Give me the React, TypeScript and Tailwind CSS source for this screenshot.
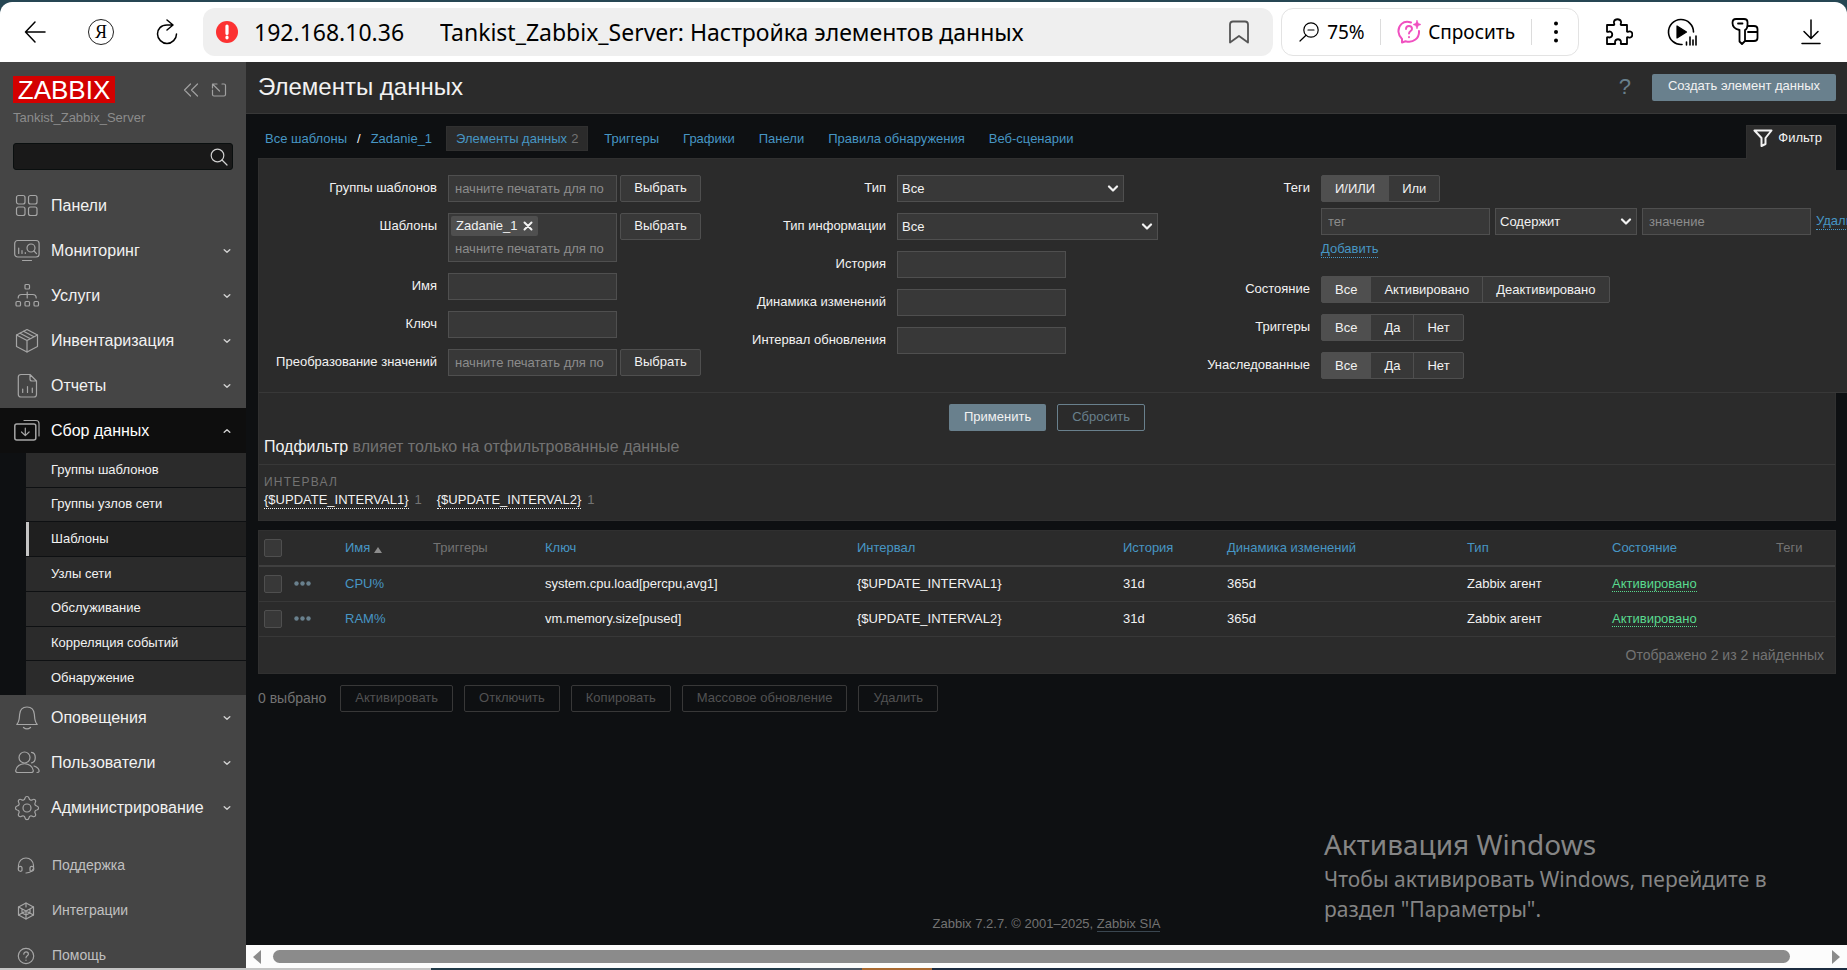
import type { ReactNode } from "react";

const sans = "font-['Liberation_Sans',Arial,sans-serif]";
const ui = "font-['Noto_Sans','Open_Sans',sans-serif]";
const field =
  "h-[27px] border border-[#4f4f4f] bg-[#383838] px-[6px] text-[13px] text-[#f2f2f2] outline-none placeholder:text-[#8c8c8c]";

function Svg({ className, box = "0 0 26 26", children }: { className?: string; box?: string; children: ReactNode }) {
  return (
    <svg aria-hidden="true" viewBox={box} fill="none" stroke="currentColor" strokeWidth="1.2" strokeLinecap="round" strokeLinejoin="round" className={className}>
      {children}
    </svg>
  );
}

const icons: Record<string, ReactNode> = {
  panels: (
    <>
      <rect x="2.5" y="2.5" width="8.5" height="8.5" rx="2" />
      <rect x="14.5" y="2.5" width="8.5" height="8.5" rx="2" />
      <rect x="2.5" y="14" width="8.5" height="8.5" rx="2" />
      <rect x="14.5" y="14" width="8.5" height="8.5" rx="2" />
    </>
  ),
  monitoring: (
    <>
      <rect x="0.7" y="2.5" width="24.4" height="16.5" rx="3" />
      <path d="M8.5 22.5h9M4.7 10v5.5M8 12.5v3M11.3 14.5v1" />
      <circle cx="17" cy="10" r="4" />
      <path d="M20 13l2.5 2.7" />
    </>
  ),
  services: (
    <>
      <rect x="11" y="1.5" width="4.5" height="4.5" rx="1" />
      <rect x="2" y="18.5" width="4.5" height="4.5" rx="1" />
      <rect x="11" y="18.5" width="4.5" height="4.5" rx="1" />
      <rect x="20" y="18.5" width="4.5" height="4.5" rx="1" />
      <path d="M13.2 9v6M4.2 15c0-2.500 1-3.500 3.500-3.500h11c2.500 0 3.500 1 3.500 3.500" />
    </>
  ),
  inventory: (
    <>
      <path d="M13 1.500l10.500 5.500v11.500L13 24 2.500 18.500V7z" />
      <path d="M2.500 7L13 12.500 23.500 7M13 12.500V24M6 5.200l10.500 5.500M9.500 3.300L20 8.800" />
    </>
  ),
  reports: (
    <>
      <path d="M7 1.500h9l6.500 6.500v13.500c0 1.500-1 2.500-2.500 2.500H7c-1.700 0-2.700-1-2.700-2.500V4c0-1.500 1-2.500 2.700-2.500zM16 1.500V6c0 1.300.7 2 2 2h4.500" />
      <path d="M8.700 16v3.500M13.500 13.500v6M18.300 15v4.500" />
    </>
  ),
  collection: (
    <>
      <rect x="0.800" y="6" width="21" height="16" rx="2" strokeWidth="1.500" />
      <path d="M10 2.500h12c2.200 0 3 .8 3 3V18M11.300 10v7.500M7.500 14l3.800 3.600 3.800-3.600" />
    </>
  ),
  alerts: (
    <>
      <path d="M2.800 19.500c2.700-3 2.500-6 2.800-10C6 4.500 9 2 13 2s7 2.500 7.400 7.500c.3 4 .1 7 2.800 10z" />
      <path d="M9.500 22.500c2 1.700 5 1.700 7 0" />
    </>
  ),
  users: (
    <>
      <circle cx="10.500" cy="7.500" r="5.500" />
      <path d="M1.700 20.500c1-9 16.500-9 17.600 0 .1 1.500-.8 2-2 2H3.700c-1.200 0-2.100-.5-2-2z" />
      <path d="M17.500 2.300c5 .5 5 10 0 10.500M20 16c3.500 1 5.500 3.500 5 5.500-.2.700-.7 1-2 1" />
    </>
  ),
  admin: (
    <>
      <circle cx="13" cy="13" r="4" />
      <path d="M11 3.200c.5-2.300 3.500-2.300 4 0 .3 1.800 2 2.500 3.500 1.500 2-1.300 4.100.8 2.800 2.800-1 1.500-.3 3.200 1.500 3.500 2.300.5 2.300 3.500 0 4-1.800.3-2.500 2-1.500 3.500 1.300 2-.8 4.100-2.800 2.800-1.500-1-3.200-.3-3.500 1.500-.5 2.300-3.500 2.300-4 0-.3-1.800-2-2.500-3.500-1.500-2 1.300-4.100-.8-2.800-2.800 1-1.500.3-3.200-1.500-3.500-2.300-.5-2.300-3.500 0-4 1.800-.3 2.500-2 1.500-3.500-1.300-2 .8-4.100 2.800-2.800 1.500 1 3.200.3 3.500-1.500z" />
    </>
  ),
  support: (
    <>
      <path d="M1.500 11V8.500C1.500 4 5 1 9 1s7.500 3 7.500 7.500V11M16 12c-.5 2.500-3 3.500-7 4" />
      <path d="M1.300 11c0-2 3.700-2.500 3.700 0v2c0 2-3.700 1.500-3.700-.5zM16.700 11c0-2-3.700-2.500-3.700 0v2c0 2 3.700 1.500 3.700-.5z" />
    </>
  ),
  integrations: (
    <>
      <path d="M9 1l7.500 4v8L9 17l-7.500-4V5z" />
      <path d="M1.500 5L9 9l7.500-4M9 9v8M9 1v4M1.500 13L9 9l7.500 4M5 7v4l4 2 4-2V7" />
    </>
  ),
  help: (
    <>
      <circle cx="9" cy="9" r="7.700" />
      <path d="M6.800 7.200c0-3 4.600-3 4.600 0 0 1.600-2.400 1.700-2.400 3.600M9 13v.3" />
    </>
  ),
};

function Chevron({ up = false }: { up?: boolean }) {
  return (
    <Svg box="0 0 8 6" className="h-[6px] w-[8px] text-[#d0d0d0]">
      <path strokeWidth="1.400" d={up ? "M1.200 4.300l2.800-2.600 2.800 2.600" : "M1.200 1.700l2.800 2.600 2.800-2.600"} />
    </Svg>
  );
}

function MenuItem({ icon, label, arrow = "down" }: { icon: string; label: string; arrow?: "down" | "up" | "none" }) {
  return (
    <a href="#" className={`flex h-[45px] shrink-0 items-center pr-[15px] pl-[14px] text-[16px] text-[#f2f2f2] ${arrow === "up" ? "bg-[#0e0e0e] text-white" : ""}`}>
      <Svg className="mr-[11px] size-[26px] text-[#a6a6a6]">{icons[icon]}</Svg>
      <span className="flex-1">{label}</span>
      {arrow !== "none" && <Chevron up={arrow === "up"} />}
    </a>
  );
}

function SmallItem({ icon, label }: { icon: string; label: string }) {
  return (
    <a href="#" className="flex h-[45px] shrink-0 items-center pl-[17px] text-[14px] text-[#c0c0c0]">
      <Svg box="0 0 18 18" className="mr-[17px] size-[18px] text-[#a6a6a6]">{icons[icon]}</Svg>
      {label}
    </a>
  );
}

const submenu = ["Группы шаблонов", "Группы узлов сети", "Шаблоны", "Узлы сети", "Обслуживание", "Корреляция событий", "Обнаружение"];

function Sidebar() {
  return (
    <aside className="flex w-[246px] shrink-0 flex-col overflow-hidden bg-[#454545]">
      <div className="flex items-center justify-between pt-[14px] pr-[19px] pl-[13px]">
        <a href="#" className="flex h-[27px] w-[102px] items-center justify-center bg-[#d40000] text-[26px] leading-none text-white">
          ZABBIX
        </a>
        <div className="flex items-center gap-[12px] text-[#a0a0a0]">
          <button type="button" aria-label="Свернуть меню">
            <Svg box="0 0 16 14" className="h-[14px] w-[16px]"><path d="M7.500 1l-6 6 6 6M14.500 1l-6 6 6 6" /></Svg>
          </button>
          <button type="button" aria-label="Скрыть меню">
            <Svg box="0 0 16 14" className="h-[14px] w-[16px]"><path d="M1.500 7v4.500c0 1 .5 1.500 1.500 1.500h10c1 0 1.500-.5 1.500-1.500V2.500c0-1-.5-1.500-1.500-1.500h-2M8.500 8L2 1.500M1.500 5V1h4.500" /></Svg>
          </button>
        </div>
      </div>
      <div className="mt-[7px] pl-[13px] text-[13px] leading-[16px] text-[#8c8c8c]">Tankist_Zabbix_Server</div>
      <form className="mx-[13px] mt-[17px] mb-[13px] flex h-[27px] shrink-0 items-center rounded-[3px] border border-[#0a0f0f] bg-[#191919] pr-[4px]">
        <input aria-label="Поиск" type="text" className="min-w-0 flex-1 bg-transparent px-[6px] text-[13px] text-white outline-none" />
        <button type="button" aria-label="Найти" className="text-[#d0d0d0]">
          <Svg box="0 0 18 18" className="size-[18px]"><circle cx="7.500" cy="7.500" r="6.300" /><path d="M12 12l5 5" /></Svg>
        </button>
      </form>
      <nav className="flex flex-col">
        <MenuItem icon="panels" label="Панели" arrow="none" />
        <MenuItem icon="monitoring" label="Мониторинг" />
        <MenuItem icon="services" label="Услуги" />
        <MenuItem icon="inventory" label="Инвентаризация" />
        <MenuItem icon="reports" label="Отчеты" />
        <MenuItem icon="collection" label="Сбор данных" arrow="up" />
        <div className="flex h-[242px] flex-col gap-px bg-[#0e1012] pl-[26px]">
          {submenu.map((s) => (
            <a key={s} href="#" className={`flex flex-1 items-center border-l-3 pb-px pl-[22px] text-[13px] text-[#f2f2f2] ${s === "Шаблоны" ? "border-[#c4c4c4] bg-[#1f1f1f]" : "border-[#2b2b2b] bg-[#2b2b2b]"}`}>
              {s}
            </a>
          ))}
        </div>
        <MenuItem icon="alerts" label="Оповещения" />
        <MenuItem icon="users" label="Пользователи" />
        <MenuItem icon="admin" label="Администрирование" />
      </nav>
      <nav className="mt-[13px] flex flex-col">
        <SmallItem icon="support" label="Поддержка" />
        <SmallItem icon="integrations" label="Интеграции" />
        <SmallItem icon="help" label="Помощь" />
      </nav>
    </aside>
  );
}

function BrowserBar() {
  return (
    <header className={`flex h-[60px] shrink-0 items-center rounded-t-[12px] bg-white pr-[26px] pl-[24px] text-black ${ui}`}>
      <button type="button" aria-label="Назад" className="mr-[42px]">
        <Svg box="0 0 22 24" className="h-[24px] w-[22px]"><path strokeWidth="1.500" d="M21 12H1.500M11 2L1.500 12 11 22" /></Svg>
      </button>
      <button type="button" aria-label="Яндекс" className="mr-[42px]">
        <span className="flex size-[26px] items-center justify-center rounded-full border border-[#222] font-['Liberation_Serif',serif] text-[18px] leading-none">Я</span>
      </button>
      <button type="button" aria-label="Обновить" className="mr-[25px]">
        <Svg box="0 0 22 26" className="h-[26px] w-[22px]"><path strokeWidth="1.500" d="M11 1l6 5-6 5M17 6h-6C5 6 1.500 10 1.500 15S6 24.500 11 24.500s9.500-4.500 9.500-9.500" /></Svg>
      </button>
      <div className="flex h-[48px] min-w-0 flex-1 items-center rounded-[12px] bg-[#efefef] pr-[24px] pl-[13px] text-[23px]">
        <svg aria-hidden="true" viewBox="0 0 22 22" className="mr-[16px] size-[22px] shrink-0">
          <circle cx="11" cy="11" r="11" fill="#fc3131" />
          <path d="M11 5v7.500M11 16.200v.6" stroke="#fff" strokeWidth="3.200" strokeLinecap="round" />
        </svg>
        <span className="mr-[36px]">192.168.10.36</span>
        <span className="flex-1 truncate">Tankist_Zabbix_Server: Настройка элементов данных</span>
        <button type="button" aria-label="В закладки" className="text-[#555]">
          <Svg box="0 0 20 24" className="h-[24px] w-[20px]"><path strokeWidth="1.800" d="M4 1.500h12c2 0 3 1 3 3v18L10 16l-9 6.500v-18c0-2 1-3 3-3z" /></Svg>
        </button>
      </div>
      <div className="ml-[8px] flex h-[48px] shrink-0 items-center rounded-[12px] border border-[#e3e3e3] pr-[20px] pl-[17px]">
        <Svg box="0 0 20 20" className="mr-[8px] size-[20px]"><circle cx="12" cy="8" r="7.200" /><path d="M7 13.200L1 19M9 8h6" /></Svg>
        <span className="w-[53px] text-[19px]">75%</span>
        <span className="h-[26px] border-l border-[#dcdcdc]" />
        <Svg box="0 0 24 24" className="mr-[7px] ml-[16px] size-[24px] text-[#f050c0]">
          <path strokeWidth="2" d="M14 2.500C6-.5 1 6 1.500 12c.2 3 1.500 5 3.500 7v3.500l3.500-1.300c8 2.300 14-3.200 13.500-10.200" />
          <path strokeWidth="1.900" d="M9 9c0-4 6-4 6 0 0 2-3 2-3 4.500M12 17v.2" />
          <path d="M20 0l1.200 3.300L24 4.500l-2.800 1.200L20 9l-1.200-3.300L16 4.500l2.800-1.200z" fill="currentColor" strokeWidth="0.500" />
        </Svg>
        <button type="button" className="mr-[16px] text-[19px]">Спросить</button>
        <span className="h-[26px] border-l border-[#dcdcdc]" />
        <button type="button" aria-label="Меню" className="ml-[22px]">
          <svg aria-hidden="true" viewBox="0 0 4 22" className="h-[22px] w-[4px]"><circle cx="2" cy="2.500" r="2" /><circle cx="2" cy="11" r="2" /><circle cx="2" cy="19.500" r="2" /></svg>
        </button>
      </div>
      <div className="ml-[26px] flex shrink-0 items-center gap-[34px]">
        <button type="button" aria-label="Расширения">
          <Svg box="0 0 28 28" className="size-[28px]"><path strokeWidth="1.800" d="M2 7h7c1-.5-.5-2 0-3.500C10 .5 15 .5 16 3.500c.5 1.500-1 3 0 3.500h6v6.500c.5 1 2-.5 3.500 0 2.500 1 2.500 5 0 6-1.500.5-3-1-3.500 0V26h-6c-.7-.5.3-1.500 0-2.500-.8-3-5.200-3-6 0-.3 1 .7 2 0 2.500H2v-6.500c.5-1 2 0 3 0 3-1 3-5 0-6-1 0-2.500 1-3 0z" /></Svg>
        </button>
        <button type="button" aria-label="Плеер">
          <Svg box="0 0 30 28" className="h-[28px] w-[30px]"><path strokeWidth="1.600" d="M15 26.500A12.500 12.500 0 1 1 26.500 14" /><path d="M10 8v12l9.500-6z" fill="currentColor" /><path strokeWidth="1.600" d="M19.500 24v3M23 19v8M26 22v5M29 18v9" /></Svg>
        </button>
        <button type="button" aria-label="Пароли">
          <Svg box="0 0 28 28" className="size-[28px]"><path strokeWidth="1.800" d="M5 1h8c2.500 0 3.500 1 3.500 3v3c0 2.500-.5 4-2.500 5v11l-3 3-2.500-2.500V12C4 11 1.500 9 1.500 5c0-3 1-4 3.500-4zM7 5.500h4.500M17 8h6c2.500 0 3.500 1 3.500 3v9c0 2-1 3-3.500 3h-9M17 14h9.500" /></Svg>
        </button>
        <button type="button" aria-label="Загрузки" className="ml-[8px]">
          <Svg box="0 0 20 26" className="h-[26px] w-[20px]"><path strokeWidth="1.500" d="M10 1v18M3 12.500l7 7 7-7M1 24.500h18" /></Svg>
        </button>
      </div>
    </header>
  );
}

function Label({ id, children }: { id?: string; children: ReactNode }) {
  return <label htmlFor={id} className="self-start text-right leading-[26px]">{children}</label>;
}

function PickButton() {
  return <button type="button" className="h-[27px] w-[81px] rounded-[2px] border border-[#4f4f4f] bg-[#383838] pb-px">Выбрать</button>;
}

function Select({ id, width, value, label }: { id: string; width: string; value: string; label?: string }) {
  return (
    <div className={`grid items-center ${width}`}>
      <select id={id} aria-label={label} className="col-start-1 row-start-1 h-[27px] w-full appearance-none border border-[#4f4f4f] bg-[#383838] px-[4px] text-[13px] text-[#f2f2f2]">
        <option>{value}</option>
      </select>
      <Svg box="0 0 12 8" className="pointer-events-none col-start-1 row-start-1 mr-[5px] h-[8px] w-[12px] justify-self-end text-[#f2f2f2]">
        <path strokeWidth="2.200" d="M2 1.500l4 4 4-4" />
      </Svg>
    </div>
  );
}

function Segmented({ name, options }: { name: string; options: string[] }) {
  return (
    <div role="radiogroup" aria-label={name} className="flex w-max overflow-hidden rounded-[2px] border border-[#4f4f4f] bg-[#4f4f4f]">
      <div className="flex gap-px">
        {options.map((o, i) => (
          <label key={o} className="relative flex h-[25px] items-center bg-[#383838] px-[13px] has-checked:bg-[#4f4f4f]">
            <input type="radio" name={name} defaultChecked={i === 0} className="sr-only" />
            {o}
          </label>
        ))}
      </div>
    </div>
  );
}

function Filter() {
  return (
    <form className="w-max min-w-full border-b border-[#383838] bg-[#2b2b2b] pt-[5px] pb-[13px] pl-[10px]">
      <div className="flex items-start gap-[45px]">
        <div className="grid grid-cols-[168px_253px] gap-x-[11px] gap-y-[11px]">
          <Label id="tgroups">Группы шаблонов</Label>
          <div className="flex gap-[3px]">
            <input id="tgroups" placeholder="начните печатать для по" className={`w-[169px] ${field}`} />
            <PickButton />
          </div>
          <Label id="templates">Шаблоны</Label>
          <div className="flex items-start gap-[3px]">
            <div className="flex h-[49px] w-[169px] flex-col items-start border border-[#4f4f4f] bg-[#383838] pt-[2px]">
              <span className="ml-[2px] flex h-[20px] items-center gap-[6px] rounded-[2px] bg-[#4f4f4f] px-[5px]">
                Zadanie_1
                <button type="button" aria-label="Убрать Zadanie_1">
                  <Svg box="0 0 10 10" className="size-[10px]"><path strokeWidth="2" d="M1.500 1.500l7 7M8.500 1.500l-7 7" /></Svg>
                </button>
              </span>
              <input id="templates" placeholder="начните печатать для по" className="w-full flex-1 bg-transparent px-[6px] text-[13px] outline-none placeholder:text-[#8c8c8c]" />
            </div>
            <PickButton />
          </div>
          <Label id="name">Имя</Label>
          <input id="name" className={`w-[169px] ${field}`} />
          <Label id="key">Ключ</Label>
          <input id="key" className={`w-[169px] ${field}`} />
          <Label id="valuemap">Преобразование значений</Label>
          <div className="flex gap-[3px]">
            <input id="valuemap" placeholder="начните печатать для по" className={`w-[169px] ${field}`} />
            <PickButton />
          </div>
        </div>
        <div className="grid grid-cols-[140px_261px] gap-x-[11px] gap-y-[11px]">
          <Label id="type">Тип</Label>
          <Select id="type" width="w-[227px]" value="Все" />
          <Label id="info">Тип информации</Label>
          <Select id="info" width="w-[261px]" value="Все" />
          <Label id="history">История</Label>
          <input id="history" className={`w-[169px] ${field}`} />
          <Label id="trends">Динамика изменений</Label>
          <input id="trends" className={`w-[169px] ${field}`} />
          <Label id="interval">Интервал обновления</Label>
          <input id="interval" className={`w-[169px] ${field}`} />
        </div>
        <div className="grid grid-cols-[107px_max-content] gap-x-[11px] gap-y-[11px]">
          <span className="text-right leading-[26px]">Теги</span>
          <div className="flex flex-col items-start gap-[6px]">
            <Segmented name="Теги" options={["И/ИЛИ", "Или"]} />
            <div className="flex items-center gap-[5px]">
              <input aria-label="тег" placeholder="тег" className={`w-[169px] ${field}`} />
              <Select id="op" label="Оператор" width="w-[142px]" value="Содержит" />
              <input aria-label="значение" placeholder="значение" className={`w-[169px] ${field}`} />
              <button type="button" className="border-b border-dotted border-[#4796c4] leading-[16px] text-[#4796c4]">Удалить</button>
            </div>
            <button type="button" className="mb-[7px] border-b border-dotted border-[#4796c4] leading-[16px] text-[#4796c4]">Добавить</button>
          </div>
          <span className="text-right leading-[26px]">Состояние</span>
          <Segmented name="Состояние" options={["Все", "Активировано", "Деактивировано"]} />
          <span className="text-right leading-[26px]">Триггеры</span>
          <Segmented name="Триггеры" options={["Все", "Да", "Нет"]} />
          <span className="text-right leading-[26px]">Унаследованные</span>
          <Segmented name="Унаследованные" options={["Все", "Да", "Нет"]} />
        </div>
      </div>
    </form>
  );
}

const check = "block size-[18px] appearance-none rounded-[2px] border border-[#4f4f4f] bg-[#383838]";
const rows = [
  { name: "CPU%", key: "system.cpu.load[percpu,avg1]", interval: "{$UPDATE_INTERVAL1}" },
  { name: "RAM%", key: "vm.memory.size[pused]", interval: "{$UPDATE_INTERVAL2}" },
];

function ItemsTable() {
  const link = "text-[#4796c4]";
  return (
    <section className="mt-[9px] border border-[#303030] bg-[#2b2b2b]">
      <table className="w-full table-fixed text-left [&_td]:py-0 [&_td]:pl-[5px] [&_th]:py-0 [&_th]:pl-[5px] [&_th]:font-normal">
        <colgroup>
          <col className="w-[30px]" />
          <col className="w-[51px]" />
          <col className="w-[88px]" />
          <col className="w-[112px]" />
          <col />
          <col className="w-[266px]" />
          <col className="w-[104px]" />
          <col className="w-[240px]" />
          <col className="w-[145px]" />
          <col className="w-[164px]" />
          <col className="w-[64px]" />
        </colgroup>
        <thead>
          <tr className="h-[35px] border-b-2 border-[#404040] text-[#737373]">
            <th><input type="checkbox" aria-label="Выбрать все" className={check} /></th>
            <th />
            <th>
              <a href="#" className="flex items-center gap-[4px] text-[#4796c4]">
                Имя
                <svg aria-hidden="true" viewBox="0 0 8 6" className="mt-[3px] h-[6px] w-[8px]"><path d="M4 0l4 6H0z" fill="#8c8c8c" /></svg>
              </a>
            </th>
            <th>Триггеры</th>
            <th><a href="#" className={link}>Ключ</a></th>
            <th><a href="#" className={link}>Интервал</a></th>
            <th><a href="#" className={link}>История</a></th>
            <th><a href="#" className={link}>Динамика изменений</a></th>
            <th><a href="#" className={link}>Тип</a></th>
            <th><a href="#" className={link}>Состояние</a></th>
            <th>Теги</th>
          </tr>
        </thead>
        <tbody>
          {rows.map((r) => (
            <tr key={r.name} className="h-[35px] border-b border-[#383838]">
              <td><input type="checkbox" aria-label={r.name} className={check} /></td>
              <td>
                <button type="button" aria-label="Действия" className="block text-[#69808d]">
                  <svg aria-hidden="true" viewBox="0 0 17 5" fill="currentColor" className="h-[5px] w-[17px]"><circle cx="2.500" cy="2.500" r="2.200" /><circle cx="8.500" cy="2.500" r="2.200" /><circle cx="14.500" cy="2.500" r="2.200" /></svg>
                </button>
              </td>
              <td><a href="#" className={link}>{r.name}</a></td>
              <td />
              <td>{r.key}</td>
              <td>{r.interval}</td>
              <td>31d</td>
              <td>365d</td>
              <td>Zabbix агент</td>
              <td><a href="#" className="border-b border-dotted border-[#59db8f] text-[#59db8f]">Активировано</a></td>
              <td />
            </tr>
          ))}
        </tbody>
      </table>
      <div className="pr-[11px] text-right text-[14px] leading-[36px] text-[#737373]">Отображено 2 из 2 найденных</div>
    </section>
  );
}

const tabs = ["Триггеры", "Графики", "Панели", "Правила обнаружения", "Веб-сценарии"];
const actions = ["Активировать", "Отключить", "Копировать", "Массовое обновление", "Удалить"];

function Main() {
  return (
    <div className="relative flex min-w-0 flex-1 flex-col bg-[#0e1012]">
      <div className="flex min-h-0 flex-1 flex-col overflow-hidden">
        <div className="flex h-[52px] shrink-0 items-center justify-between border-b border-[#383838] bg-[#2b2b2b] pr-[11px] pb-px pl-[12px]">
          <h1 className="text-[24px] leading-none">Элементы данных</h1>
          <div className="flex items-center gap-[21px]">
            <a href="#" className="text-[22px] leading-none text-[#69808d]">?</a>
            <button type="button" className="h-[27px] rounded-[2px] bg-[#69808d] px-[16px] pb-[2px]">Создать элемент данных</button>
          </div>
        </div>
        <main className="pr-[11px] pl-[12px]">
          <div className="flex h-[44px] items-start justify-between pt-[11px]">
            <nav className="mt-px flex h-[25px] items-center gap-[24px] pl-[7px] text-[#4796c4]">
              <div className="-mr-[8px] flex items-center gap-[10px]">
                <a href="#">Все шаблоны</a>
                <span className="text-[#f2f2f2]">/</span>
                <a href="#">Zadanie_1</a>
                <a href="#" className="ml-[4px] flex h-[25px] items-center gap-[4px] border border-[#303030] bg-[#2b2b2b] px-[9px]">
                  Элементы данных <span className="text-[#737373]">2</span>
                </a>
              </div>
              {tabs.map((t) => <a key={t} href="#">{t}</a>)}
            </nav>
            <button type="button" className="z-10 flex h-[34px] items-start gap-[5px] border-x border-t border-[#303030] bg-[#2b2b2b] px-[6px] pt-[3px] pr-[13px]">
              <Svg box="0 0 20 18" className="h-[18px] w-[20px]"><path strokeWidth="2" d="M1.500 1.500h17L12.500 9v6l-4 2V9z" /></Svg>
              <span className="leading-[18px]">Фильтр</span>
            </button>
          </div>
          <section className="border border-[#303030] bg-[#2b2b2b] pt-[11px]">
            <Filter />
            <div className="flex justify-center gap-[11px] pt-[11px]">
              <button type="button" className="h-[27px] rounded-[2px] bg-[#69808d] px-[15px] pb-px">Применить</button>
              <button type="button" className="h-[27px] rounded-[2px] border border-[#69808d] px-[14px] pb-px text-[#69808d]">Сбросить</button>
            </div>
            <div className="mt-[6px] border-b border-[#383838] pb-[7px] pl-[5px] text-[16px] leading-[20px] text-[#737373]">
              <span className="text-[#f2f2f2]">Подфильтр</span> влияет только на отфильтрованные данные
            </div>
            <div className="px-[5px] pt-[8px] pb-[11px]">
              <div className="text-[12px] leading-[18px] tracking-widest text-[#737373]">ИНТЕРВАЛ</div>
              <div className="flex gap-[15px] text-[#737373]">
                {["{$UPDATE_INTERVAL1}", "{$UPDATE_INTERVAL2}"].map((m) => (
                  <span key={m} className="flex items-start gap-[6px] leading-[17px]">
                    <a href="#" className="border-b border-dotted border-[#f2f2f2] text-[#f2f2f2]">{m}</a>1
                  </span>
                ))}
              </div>
            </div>
          </section>
          <ItemsTable />
          <div className="mt-[11px] flex items-center gap-[11px]">
            <span className="mr-[3px] text-[14px] text-[#737373]">0 выбрано</span>
            {actions.map((a) => (
              <button key={a} type="button" disabled className="h-[27px] rounded-[2px] border border-[#383838] px-[14px] pb-px text-[#525252]">{a}</button>
            ))}
          </div>
        </main>
        <footer className="mt-auto pb-[13px] text-center leading-[16px] text-[#737373]">
          Zabbix 7.2.7. © 2001–2025, <a href="#" className="border-b border-[#3a4650]">Zabbix SIA</a>
        </footer>
      </div>
      <div className="flex h-[23px] shrink-0 items-center justify-between bg-[#fcfcfc] pr-[7px] pl-[7px] text-[#8b8b8b]">
        <svg aria-hidden="true" viewBox="0 0 8 14" className="h-[14px] w-[8px]"><path d="M8 0v14L0 7z" fill="currentColor" /></svg>
        <div className="mr-[42px] ml-[12px] h-[13px] flex-1 rounded-full bg-[#8b8b8b]" />
        <svg aria-hidden="true" viewBox="0 0 8 14" className="h-[14px] w-[8px]"><path d="M0 0v14l8-7z" fill="currentColor" /></svg>
      </div>
      <div className={`pointer-events-none absolute right-[53px] bottom-[44px] w-[470px] text-[21px] leading-[30px] text-[#858585] ${ui}`}>
        <div className="text-[28px] leading-[40px]">Активация Windows</div>
        <div>Чтобы активировать Windows, перейдите в раздел "Параметры".</div>
      </div>
    </div>
  );
}

export default function App() {
  return (
    <div className={`flex h-screen flex-col overflow-hidden bg-[#264653] pt-[2px] text-[13px] text-[#f2f2f2] ${sans}`}>
      <BrowserBar />
      <div className="flex min-h-0 flex-1">
        <Sidebar />
        <Main />
      </div>
      <div className="flex h-[2px] shrink-0 bg-[#1c2c40]">
        <span className="w-[431px] bg-[#c4c4c4]" />
        <span className="w-[369px] bg-[#203a48]" />
        <span className="w-[62px] bg-[#4a5662]" />
        <span className="w-[70px] bg-[#a96a30]" />
      </div>
    </div>
  );
}
